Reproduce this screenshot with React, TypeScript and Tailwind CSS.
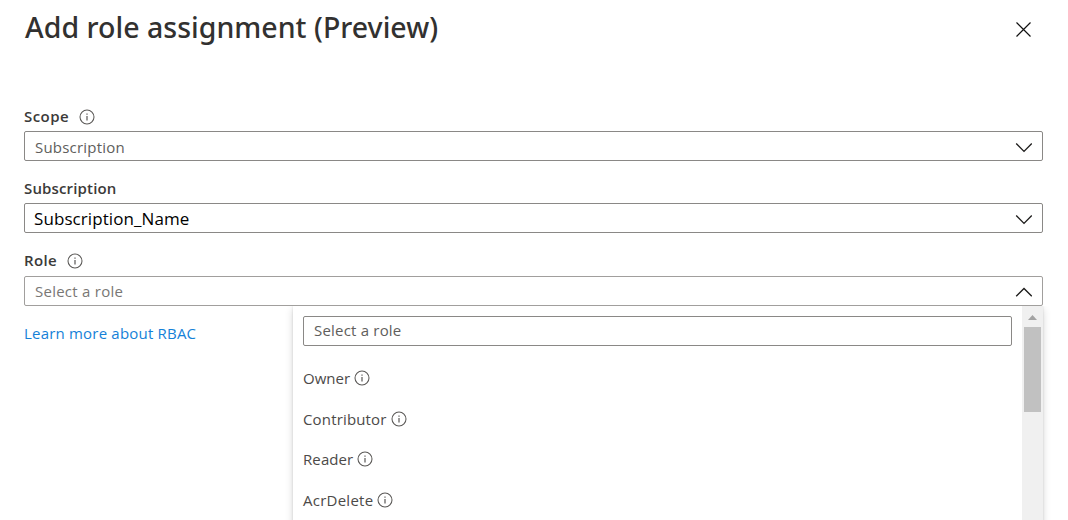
import React from "react";

function InfoIcon({ className = "" }: { className?: string }) {
  return (
    <svg className={`h-4 w-4 shrink-0 ${className}`} viewBox="0 0 16 16" fill="none">
      <circle cx="8" cy="8" r="7" stroke="#5a5856" strokeWidth="1.05" />
      <path d="M8 7v4.5" stroke="#4a4846" strokeWidth="1.1" />
      <path d="M8 4.5v1.2" stroke="#4a4846" strokeWidth="1.1" />
    </svg>
  );
}

function Chevron({ up = false }: { up?: boolean }) {
  return (
    <svg className={`h-[10px] w-[17px] shrink-0 ${up ? "mt-[2px]" : "mt-[3px]"}`} viewBox="0 0 17 10" fill="none">
      <path d={up ? "M1.2 9.2 9 1.4 16.8 9.2" : "M1.2 .6 9 8.4 16.8 .6"} stroke="#1b1a19" strokeWidth="1.35" />
    </svg>
  );
}

interface SelectBoxProps {
  up?: boolean;
  border?: string;
  children: React.ReactNode;
}

function SelectBox({ up, border = "border-[#8a8886]", children }: SelectBoxProps) {
  return (
    <div className={`flex h-[30px] items-center justify-between rounded-[2px] border bg-white pr-[10px] ${border}`}>
      {children}
      <Chevron up={up} />
    </div>
  );
}

const roles = [
  { name: "Owner", text: "tracking-[0px]", row: "h-[41px]" },
  { name: "Contributor", text: "tracking-[0.16px]", row: "h-[40px]" },
  { name: "Reader", text: "tracking-[0.1px]", row: "h-[41px]" },
  { name: "AcrDelete", text: "tracking-[0.25px]", row: "h-[41px]" },
];

function RoleMenu() {
  return (
    <div className="absolute top-[30px] right-0 flex h-[260px] w-[750px] bg-white shadow-[0_3px_8px_rgba(0,0,0,0.16),0_0_2px_rgba(0,0,0,0.12)] [clip-path:inset(0_-20px_-20px_-20px)]">
      <div className="flex-1 pt-[10px] pr-[10px] pl-[10px]">
        <div className="flex h-[30px] items-center rounded-[2px] border border-[#8a8886] pb-[2px] pl-[10px] text-[15px] tracking-[0.2px] text-[#605e5c]">
          Select a role
        </div>
        <ul className="pt-[12px]">
          {roles.map((role) => (
            <li key={role.name} className={`flex items-center gap-1 text-[15px] text-[#4c4a48] ${role.row}`}>
              <span className={role.text}>{role.name}</span>
              <InfoIcon className="-mt-px" />
            </li>
          ))}
        </ul>
      </div>
      <div className="flex w-[21px] flex-col items-center bg-[#f0f0f0] pt-[9px]">
        <svg className="h-[5px] w-[9px]" viewBox="0 0 9 5">
          <path d="M0 5 4.5 0 9 5z" fill="#a3a3a3" />
        </svg>
        <div className="mt-[7px] h-[85px] w-[17px] bg-[#c1c1c1]" />
      </div>
    </div>
  );
}

export default function App() {
  return (
    <div className="h-[520px] w-[1068px] overflow-hidden bg-white pr-[25px] pl-[24px] font-['Open_Sans','Noto_Sans',sans-serif]">
      <header className="flex h-[103px] items-start justify-between">
        <h1 className="pt-[7px] pl-px font-['Noto_Sans','Open_Sans',sans-serif] text-[28.5px] leading-[40px] font-medium tracking-[0.02px] text-[#323130]">
          Add role assignment (Preview)
        </h1>
        <svg className="mt-[22px] mr-[12px] h-[15px] w-[15px]" viewBox="0 0 15 15" fill="none">
          <path d="M.5.5l14 14M14.5.5l-14 14" stroke="#111" strokeWidth="1.2" />
        </svg>
      </header>

      <div className="mb-px flex h-[27px] items-center text-[#3b3a39]">
        <span className="text-[15px] font-semibold tracking-[0.45px]">Scope</span>
        <InfoIcon className="ml-[10px]" />
      </div>
      <SelectBox>
        <span className="pt-[2px] pl-[10px] text-[15px] tracking-[0.2px] text-[#605e5c]">Subscription</span>
      </SelectBox>

      <div className="mt-[14px] mb-px flex h-[27px] items-center text-[#3b3a39]">
        <span className="text-[15px] font-semibold tracking-[0.15px]">Subscription</span>
      </div>
      <SelectBox>
        <span className="pt-[2px] pl-[9px] text-[17px] tracking-[0.08px] text-black">Subscription_Name</span>
      </SelectBox>

      <div className="mt-[14px] mb-px flex h-[28px] items-center text-[#3b3a39]">
        <span className="pb-[2px] text-[15px] font-semibold tracking-[0.35px]">Role</span>
        <InfoIcon className="ml-[10px]" />
      </div>
      <div className="relative">
        <SelectBox up border="border-[#a19f9d]">
          <span className="pl-[10px] text-[15px] tracking-[0.25px] text-[#797775]">Select a role</span>
        </SelectBox>
        <RoleMenu />
      </div>
      <a className="mt-[16px] inline-block text-[15px] leading-[22px] tracking-[0.2px] text-[#1581d8]">
        Learn more about RBAC
      </a>
    </div>
  );
}
